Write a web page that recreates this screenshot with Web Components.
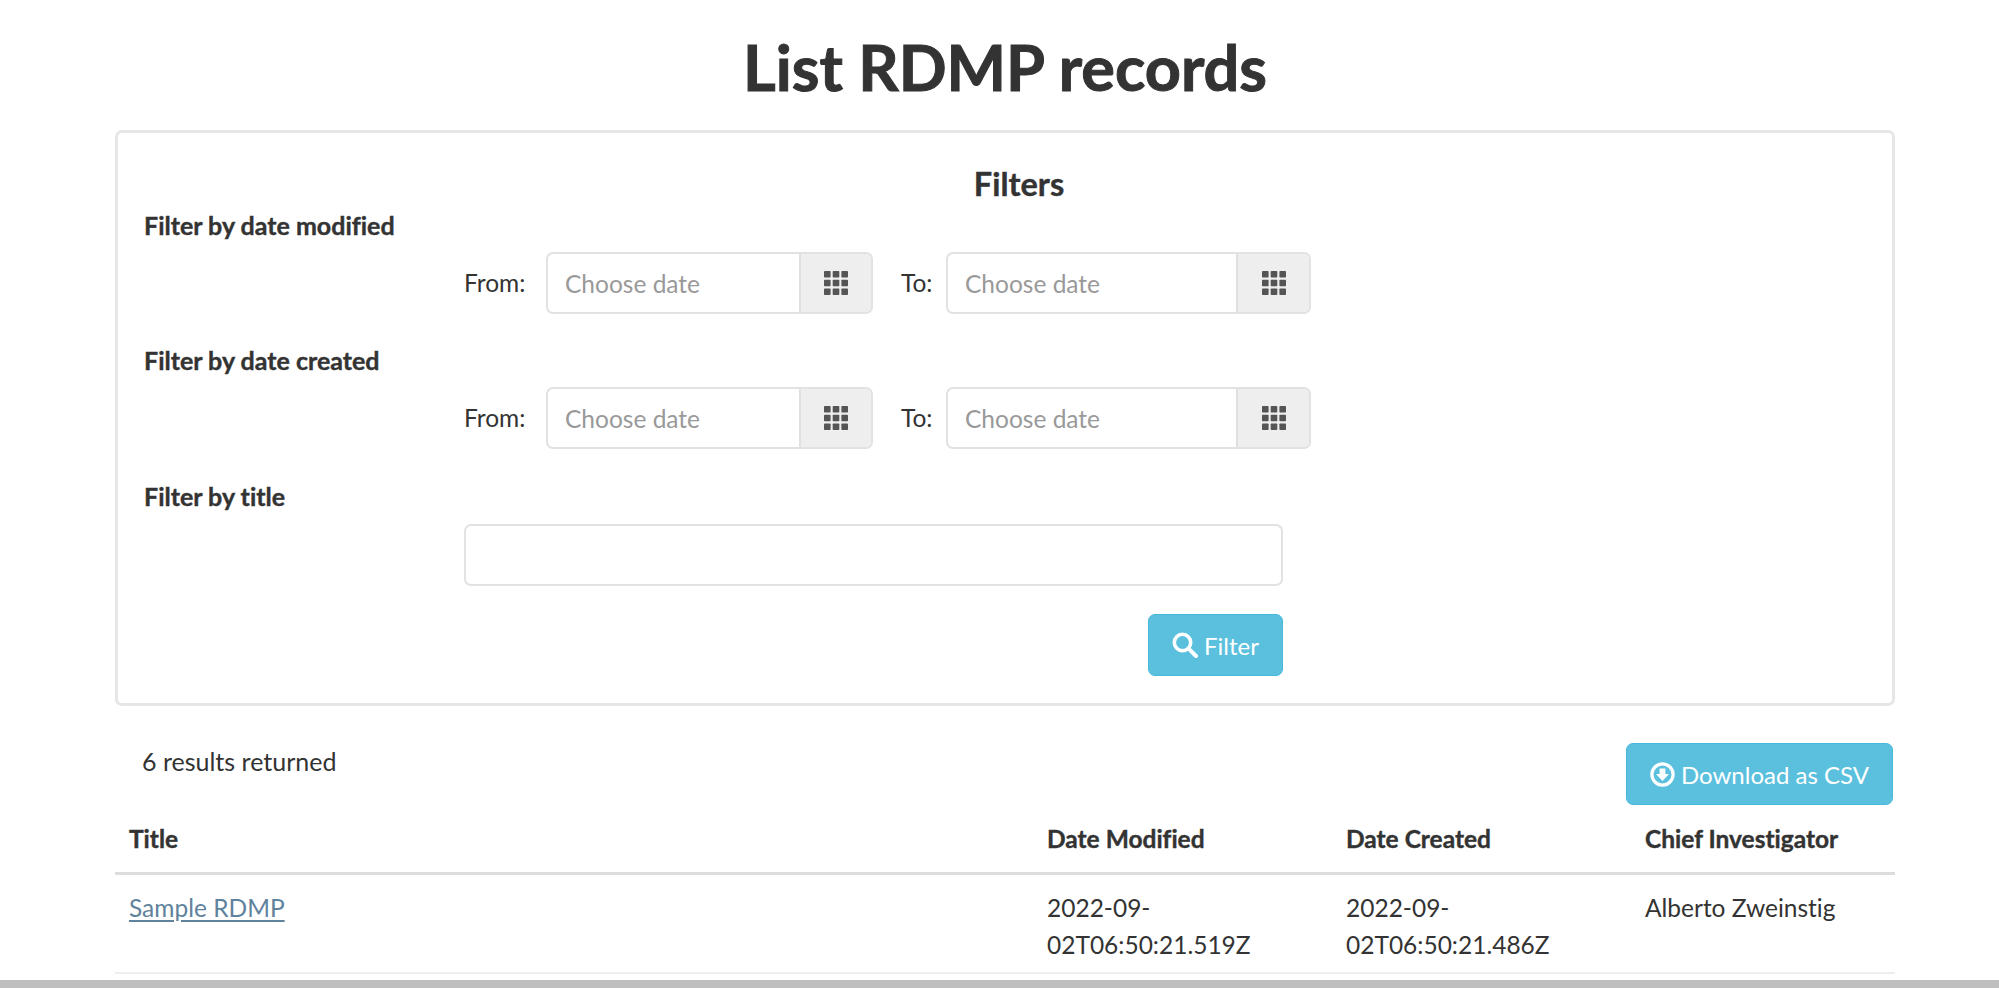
<!DOCTYPE html>
<html lang="en">
<head>
<meta charset="utf-8">
<title>List RDMP records</title>
<style>
  html, body { margin: 0; height: 100%; background: #fff; }
  body { font-family: "Lato", "Open Sans", sans-serif; color: #333; font-size: 24.5px; overflow: hidden; font-variant-ligatures: none; }
</style>
</head>
<body>
<rdmp-page>
  <page-title>List RDMP records</page-title>
  <filter-panel heading="Filters">
    <filter-group label="Filter by date modified">
      <date-range></date-range>
    </filter-group>
    <filter-group label="Filter by date created">
      <date-range></date-range>
    </filter-group>
    <filter-group label="Filter by title" tight>
      <text-field></text-field>
    </filter-group>
    <action-button slot="actions" icon="search" style="--w:135px">Filter</action-button>
  </filter-panel>
  <results-bar>
    6 results returned
    <action-button slot="action" icon="download" style="--w:267px">Download as CSV</action-button>
  </results-bar>
  <results-table>
    <table-row head>
      <span>Title</span><span>Date Modified</span><span>Date Created</span><span>Chief Investigator</span>
    </table-row>
    <table-row>
      <record-link>Sample RDMP</record-link><span>2022-09-02T06:50:21.519Z</span><span>2022-09-02T06:50:21.486Z</span><span>Alberto Zweinstig</span>
    </table-row>
  </results-table>
</rdmp-page>

<script>
const ICONS = {
  grid: '<svg width="24" height="24" viewBox="0 0 24 24" fill="#555"><rect x="0" y="0" width="6.6" height="6.6" rx=".8"/><rect x="8.7" y="0" width="6.6" height="6.6" rx=".8"/><rect x="17.4" y="0" width="6.6" height="6.6" rx=".8"/><rect x="0" y="8.7" width="6.6" height="6.6" rx=".8"/><rect x="8.7" y="8.7" width="6.6" height="6.6" rx=".8"/><rect x="17.4" y="8.7" width="6.6" height="6.6" rx=".8"/><rect x="0" y="17.4" width="6.6" height="6.6" rx=".8"/><rect x="8.7" y="17.4" width="6.6" height="6.6" rx=".8"/><rect x="17.4" y="17.4" width="6.6" height="6.6" rx=".8"/></svg>',
  search: '<svg width="26" height="26" viewBox="0 0 26 26" fill="none" stroke="#fff" stroke-width="3.6" stroke-linecap="round"><circle cx="10.5" cy="10.5" r="8.2"/><path d="M16.8 16.8 L24 24" stroke-width="4"/></svg>',
  download: '<svg width="25" height="25" viewBox="0 0 25 25"><circle cx="12.5" cy="12.5" r="10.6" fill="none" stroke="#fff" stroke-width="3.2"/><path d="M9.6 6.5h5.8v5.6h3.6l-6.5 7-6.5-7h3.6z" fill="#fff"/></svg>'
};

function define(name, css, html) {
  class El extends HTMLElement {
    constructor() {
      super();
      this.attachShadow({ mode: 'open' });
    }
    connectedCallback() {
      const markup = typeof html === 'function' ? html(this) : html;
      this.shadowRoot.innerHTML = '<style>' + css + '</style>' + markup;
    }
  }
  customElements.define(name, El);
}

define('rdmp-page', `
  :host { display: flex; flex-direction: column; height: 988px; overflow: hidden; }
  main { flex: 1; min-height: 0; overflow: hidden; padding: 0 104px 0 115px; }
  .band { flex: none; height: 8px; background: #bfbfbf; }
`, '<main><slot></slot></main><div class="band"></div>');

define('page-title', `
  :host { display: block; height: 130px; }
  h1 { margin: 0; height: 130px; line-height: 134px; text-align: center; font-size: 63px; font-weight: 700; color: #333; -webkit-text-stroke: 1px #333; }
`, '<h1><slot></slot></h1>');

define('filter-panel', `
  :host { display: block; box-sizing: border-box; height: 576px; border: 3px solid #e6e6e6; border-radius: 7px; padding: 33px 27px 0; }
  h3 { margin: 0 0 8px; height: 36px; line-height: 36px; text-align: center; font-size: 32.5px; font-weight: 700; color: #333; padding-left: 28px; -webkit-text-stroke: .4px #333; }
  .actions { display: flex; justify-content: flex-end; width: 1138px; margin-top: 28px; }
`, el => `<h3>${el.getAttribute('heading') || ''}</h3><slot></slot><div class="actions"><slot name="actions"></slot></div>`);

define('filter-group', `
  :host { display: block; margin-bottom: 31px; }
  :host([tight]) { margin-bottom: 0; padding-top: 1px; }
  .label { height: 30px; line-height: 30px; font-weight: 700; font-size: 25px; color: #333; margin-bottom: 12px; margin-left: -1px; -webkit-text-stroke: .4px #333; }
  :host([tight]) .label { margin-bottom: 13px; }
  .body { padding-left: 319px; }
`, el => `<div class="label">${el.getAttribute('label')}</div><div class="body"><slot></slot></div>`);

define('date-range', `
  :host { display: flex; align-items: center; height: 62px; }
  span { line-height: 30px; font-size: 24.5px; color: #333; }
  .from { width: 82px; }
  .to { width: 45px; margin-left: 28px; }
  date-field.a { width: 327px; }
  date-field.b { width: 365px; }
`, `<span class="from">From:</span><date-field class="a" addon="72"></date-field><span class="to">To:</span><date-field class="b" addon="73"></date-field>`);

define('date-field', `
  :host { display: flex; box-sizing: border-box; height: 62px; border: 2.5px solid #e2e2e2; border-radius: 7px; overflow: hidden; background: #fff; }
  .ph { flex: 1; padding-left: 17px; line-height: 59px; color: #999; font-size: 24.5px; }
  .addon { flex: none; box-sizing: border-box; display: flex; align-items: center; justify-content: center; background: #eee; border-left: 2px solid #e0e0e0; }
`, el => `<div class="ph">Choose date</div><div class="addon" style="width:${el.getAttribute('addon')}px">${ICONS.grid}</div>`);

define('text-field', `
  :host { display: block; box-sizing: border-box; width: 819px; height: 62px; border: 2.5px solid #e2e2e2; border-radius: 7px; background: #fff; }
`, '');

define('action-button', `
  :host { display: inline-flex; box-sizing: border-box; align-items: center; justify-content: center; gap: 6px; width: var(--w); height: 62px; background: #5bc0de; border: 1.5px solid #46b8da; border-radius: 7px; color: #fff; font-size: 24px; white-space: nowrap; }
  .icon { display: flex; }
`, el => `<span class="icon">${ICONS[el.getAttribute('icon')] || ''}</span><span><slot></slot></span>`);

define('results-bar', `
  :host { display: flex; justify-content: space-between; align-items: flex-start; height: 62px; margin-top: 37px; padding: 0 2px 0 27px; font-size: 25px; color: #333; }
  .text { padding-top: 3px; line-height: 30px; }
`, '<div class="text"><slot></slot></div><slot name="action"></slot>');

define('results-table', `
  :host { display: block; width: 1780px; }
`, '<slot></slot>');

define('table-row', `
  :host { display: grid; grid-template-columns: 918px 299px 299px 264px; box-sizing: border-box; }
  :host([head]) { height: 70px; border-bottom: 3px solid #ddd; align-items: end; font-weight: 700; -webkit-text-stroke: .4px #333; }
  :host(:not([head])) { height: 99px; border-bottom: 2px solid #eee; line-height: 37px; padding-top: 14px; }
  ::slotted(*) { padding: 0 14px; display: block; box-sizing: border-box; min-width: 0; }
  :host([head]) ::slotted(*) { padding-bottom: 18px; line-height: 30px; }
`, '<slot></slot>');

define('record-link', `
  :host { display: block; }
  a { color: #5f829d; text-decoration: underline; text-underline-offset: 3px; }
`, '<a href="#"><slot></slot></a>');
</script>
</body>
</html>
